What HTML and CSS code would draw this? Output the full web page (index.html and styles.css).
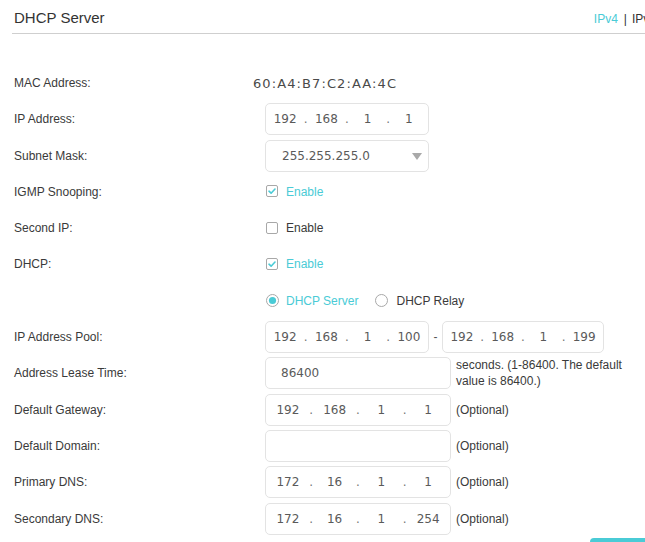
FILE: index.html
```html
<!DOCTYPE html>
<html>
<head>
<meta charset="utf-8">
<link rel="stylesheet" href="styles.css">
</head>
<body>
<div class="page">
  <div class="header">
    <div class="title">DHCP Server</div>
    <div class="tabs"><span class="tab active">IPv4</span><span class="sep">|</span><span class="tab">IPv6</span></div>
  </div>

  <div class="form">
    <div class="label">MAC Address:</div>
    <div class="ctrl"><span class="mac">60:A4:B7:C2:AA:4C</span></div>

    <div class="label">IP Address:</div>
    <div class="ctrl">
      <div class="box ip sm"><span class="seg">192</span><span class="dot">.</span><span class="seg">168</span><span class="dot">.</span><span class="seg">1</span><span class="dot">.</span><span class="seg">1</span></div>
    </div>

    <div class="label">Subnet Mask:</div>
    <div class="ctrl">
      <div class="box select sm"><span class="val">255.255.255.0</span><span class="arrow"></span></div>
    </div>

    <div class="label">IGMP Snooping:</div>
    <div class="ctrl">
      <span class="check on"><svg viewBox="0 0 12 12" width="12" height="12"><rect x="0.5" y="0.5" width="11" height="11" rx="1.5" fill="#fff" stroke="#a8a8a8"/><path d="M3 6.2 L5.1 8.2 L9 4" fill="none" stroke="#4acbd6" stroke-width="1.6" stroke-linecap="round" stroke-linejoin="round"/></svg></span>
      <span class="opt on">Enable</span>
    </div>

    <div class="label">Second IP:</div>
    <div class="ctrl">
      <span class="check"><svg viewBox="0 0 12 12" width="12" height="12"><rect x="0.5" y="0.5" width="11" height="11" rx="1.5" fill="#fff" stroke="#a8a8a8"/></svg></span>
      <span class="opt">Enable</span>
    </div>

    <div class="label">DHCP:</div>
    <div class="ctrl">
      <span class="check on"><svg viewBox="0 0 12 12" width="12" height="12"><rect x="0.5" y="0.5" width="11" height="11" rx="1.5" fill="#fff" stroke="#a8a8a8"/><path d="M3 6.2 L5.1 8.2 L9 4" fill="none" stroke="#4acbd6" stroke-width="1.6" stroke-linecap="round" stroke-linejoin="round"/></svg></span>
      <span class="opt on">Enable</span>
    </div>

    <div class="label"></div>
    <div class="ctrl">
      <span class="radio"><svg viewBox="0 0 13 13" width="13" height="13"><circle cx="6.5" cy="6.5" r="6" fill="#fff" stroke="#a8a8a8"/><circle cx="6.5" cy="6.5" r="3.6" fill="#4acbd6"/></svg></span>
      <span class="opt on">DHCP Server</span>
      <span class="radio second"><svg viewBox="0 0 13 13" width="13" height="13"><circle cx="6.5" cy="6.5" r="6" fill="#fff" stroke="#a8a8a8"/></svg></span>
      <span class="opt">DHCP Relay</span>
    </div>

    <div class="label">IP Address Pool:</div>
    <div class="ctrl">
      <div class="box ip sm"><span class="seg">192</span><span class="dot">.</span><span class="seg">168</span><span class="dot">.</span><span class="seg">1</span><span class="dot">.</span><span class="seg">100</span></div>
      <span class="dash">-</span>
      <div class="box ip pool2"><span class="seg">192</span><span class="dot">.</span><span class="seg">168</span><span class="dot">.</span><span class="seg">1</span><span class="dot">.</span><span class="seg">199</span></div>
    </div>

    <div class="label">Address Lease Time:</div>
    <div class="ctrl">
      <div class="box text lg"><span class="val">86400</span></div>
      <span class="note wrap">seconds. (1-86400. The default value is 86400.)</span>
    </div>

    <div class="label">Default Gateway:</div>
    <div class="ctrl">
      <div class="box ip lg"><span class="seg">192</span><span class="dot">.</span><span class="seg">168</span><span class="dot">.</span><span class="seg">1</span><span class="dot">.</span><span class="seg">1</span></div>
      <span class="note">(Optional)</span>
    </div>

    <div class="label">Default Domain:</div>
    <div class="ctrl">
      <div class="box text lg"><span class="val"></span></div>
      <span class="note">(Optional)</span>
    </div>

    <div class="label">Primary DNS:</div>
    <div class="ctrl">
      <div class="box ip lg"><span class="seg">172</span><span class="dot">.</span><span class="seg">16</span><span class="dot">.</span><span class="seg">1</span><span class="dot">.</span><span class="seg">1</span></div>
      <span class="note">(Optional)</span>
    </div>

    <div class="label">Secondary DNS:</div>
    <div class="ctrl">
      <div class="box ip lg"><span class="seg">172</span><span class="dot">.</span><span class="seg">16</span><span class="dot">.</span><span class="seg">1</span><span class="dot">.</span><span class="seg">254</span></div>
      <span class="note">(Optional)</span>
    </div>
  </div>

  <div class="footer">
    <button class="save">Save</button>
  </div>
</div>
</body>
</html>
```

FILE: styles.css
```css
html, body {
  margin: 0;
  padding: 0;
  overflow: hidden;
  background: #fff;
}

body {
  font-family: "Liberation Sans", Arial, sans-serif;
  font-size: 12px;
  color: #3a3a3a;
}

.page {
  width: 644px;
  padding-left: 12px;
}

.header {
  display: flex;
  justify-content: space-between;
  align-items: baseline;
  height: 34px;
  padding-top: 2px;
  box-sizing: border-box;
  line-height: 31px;
  border-bottom: 1px solid #cfcfcf;
}

.title {
  font-size: 15px;
  color: #333;
  padding-left: 2px;
}

.tabs {
  font-size: 12px;
  color: #333;
}

.tab.active {
  color: #4acbd6;
}

.sep {
  margin: 0 5px 0 6px;
}

.form {
  display: grid;
  grid-template-columns: 253px auto;
  grid-auto-rows: 32px;
  row-gap: 4.3px;
  margin-top: 33px;
}

.label {
  display: flex;
  align-items: center;
  padding-left: 2px;
  color: #3a3a3a;
}

.ctrl {
  display: flex;
  align-items: center;
}

.mac {
  font-family: "DejaVu Sans", Verdana, sans-serif;
  font-size: 13px;
  letter-spacing: 1.1px;
  color: #4a4a4a;
  margin-left: -12px;
}

.box {
  height: 32px;
  box-sizing: border-box;
  border: 1px solid #e3e3e3;
  border-radius: 5px;
  background: #fff;
  display: flex;
  align-items: center;
  font-family: "DejaVu Sans", Verdana, sans-serif;
  font-size: 12px;
  color: #5a5a5a;
}

.box.sm {
  width: 164px;
}

.box.pool2 {
  width: 162px;
}

.box.lg {
  width: 186px;
}

.ip {
  padding: 0 2px;
}

.seg {
  flex: 1;
  text-align: center;
}

.dot {
  width: 7px;
  text-align: center;
  color: #777;
}

.select {
  padding-left: 16px;
  justify-content: space-between;
  padding-right: 6px;
}

.arrow {
  width: 0;
  height: 0;
  border-left: 5px solid transparent;
  border-right: 5px solid transparent;
  border-top: 7px solid #a9a9a9;
  margin-top: 1px;
}

.text {
  padding-left: 15px;
}

.check, .radio {
  display: inline-flex;
  width: 13px;
  height: 13px;
  margin-left: 1px;
  margin-right: 7px;
}

.radio.second {
  margin-left: 17px;
  margin-right: 8px;
}

.opt {
  color: #3a3a3a;
}

.opt.on {
  color: #4acbd6;
}

.dash {
  width: 13px;
  text-align: center;
  color: #555;
}

.note {
  margin-left: 5px;
  color: #3a3a3a;
  line-height: 16px;
}

.note.wrap {
  width: 175px;
  margin-top: -1px;
}

.footer {
  padding-left: 578px;
  padding-top: 3px;
}

.save {
  width: 80px;
  height: 32px;
  border: none;
  border-radius: 4px;
  background: #4acbd6;
  color: #fff;
  font-family: "Liberation Sans", Arial, sans-serif;
  font-size: 13px;
}
```
